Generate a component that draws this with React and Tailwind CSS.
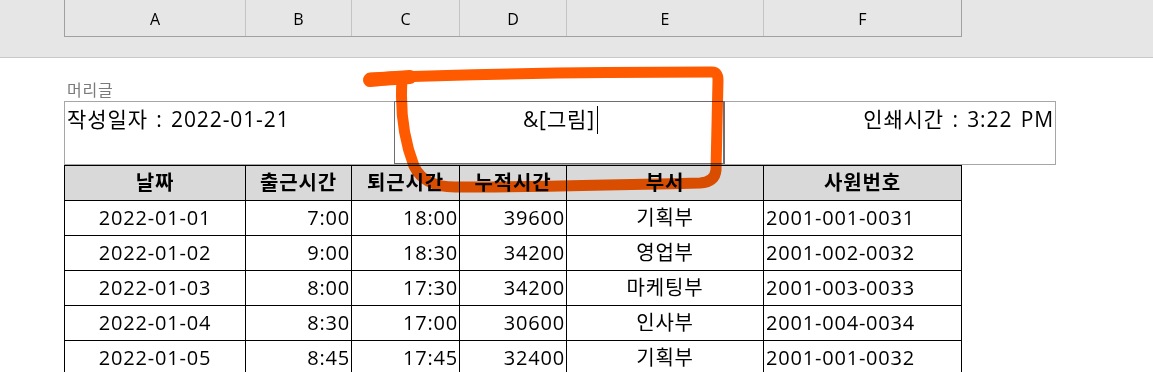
import React from "react";

const cols = [
  { l: "A", w: "w-[181px]" },
  { l: "B", w: "w-[106px]" },
  { l: "C", w: "w-[108px]" },
  { l: "D", w: "w-[107px]" },
  { l: "E", w: "w-[197px]" },
  { l: "F", w: "w-[198px]" },
];

const rows = [
  ["2022-01-01", "7:00", "18:00", "39600", "기획부", "2001-001-0031"],
  ["2022-01-02", "9:00", "18:30", "34200", "영업부", "2001-002-0032"],
  ["2022-01-03", "8:00", "17:30", "34200", "마케팅부", "2001-003-0033"],
  ["2022-01-04", "8:30", "17:00", "30600", "인사부", "2001-004-0034"],
  ["2022-01-05", "8:45", "17:45", "32400", "기획부", "2001-001-0032"],
];

const heads = ["날짜", "출근시간", "퇴근시간", "누적시간", "부서", "사원번호"];
const align = ["text-center", "text-right pr-[1px]", "text-right pr-[1px]", "text-right pr-[1px]", "text-center", "text-left pl-[2px]"];

export default function App() {
  return (
    <div
      className="relative w-[1153px] h-[372px] overflow-hidden bg-white text-black"
      style={{ fontFamily: '"Open Sans", "Noto Sans CJK KR", sans-serif' }}
    >
      {/* column header bar */}
      <div className="h-[58px] bg-[#e6e6e6] border-b border-[#c8c8c8]">
        <div className="flex pl-[64px]">
          <div className="flex h-[37px] border-l border-b border-[#a0a0a0]">
            {cols.map((c) => (
              <div
                key={c.l}
                className={`${c.w} flex items-center justify-center border-r border-[#c4c4c4] last:border-[#a0a0a0] text-[16px] leading-none pt-[1px]`}
              >
                {c.l}
              </div>
            ))}
          </div>
        </div>
      </div>

      {/* page header area */}
      <div className="pl-[64px]">
        <div className="h-[43px] flex items-end pl-[3px] pb-[1px] text-[16px] leading-[20px] tracking-[0.8px] text-[#7a7a7a]">
          머리글
        </div>
        <div className="flex w-[992px] h-[64px] border border-[#a6a6a6] text-[21px] leading-[28px] tracking-[0.9px] [word-spacing:2px]">
          <div className="w-[329px] pl-[2px] pt-[3px]">작성일자 : 2022-01-21</div>
          <div className="w-[331px] h-[63px] -mt-px border border-r-2 border-[#6e6e6e] flex justify-center pt-[3px]">
            <span className="relative">
              &amp;[그림]
              <span className="absolute -right-[3px] top-[1px] w-px h-[28px] bg-black" />
            </span>
          </div>
          <div className="flex-1 text-right pr-[1px] pt-[3px]">인쇄시간 : 3:22 PM</div>
        </div>

        {/* data table */}
        <table className="border-collapse text-[20px] leading-none tracking-[0.8px]">
          <thead>
            <tr className="h-[35px] bg-[#d9d9d9]">
              {heads.map((h, i) => (
                <th key={h} className={`${cols[i].w} border border-black font-bold text-center p-0`}>
                  {h}
                </th>
              ))}
            </tr>
          </thead>
          <tbody>
            {rows.map((r, ri) => (
              <tr key={ri} className="h-[35px]">
                {r.map((v, i) => (
                  <td key={i} className={`border border-black p-0 ${align[i]}`}>
                    {v}
                  </td>
                ))}
              </tr>
            ))}
          </tbody>
        </table>
      </div>

      {/* orange hand-drawn highlight */}
      <svg
        className="absolute left-0 top-0 pointer-events-none mix-blend-multiply"
        width="1153"
        height="372"
        viewBox="0 0 1153 372"
      >
        <path
          d="M 370 78 C 470 74, 600 72, 712 72 Q 718 72 718 80 L 716 170 Q 715 182 700 183 C 620 185, 520 187, 455 187 Q 424 187 414 166 C 404 140, 400 110, 402 80"
          fill="none"
          stroke="#ff5a00"
          strokeWidth="11"
          strokeLinecap="round"
          strokeLinejoin="round"
        />
        <path
          d="M 370 80 C 380 79, 395 78, 410 77"
          fill="none"
          stroke="#ff5a00"
          strokeWidth="14"
          strokeLinecap="round"
        />
      </svg>
    </div>
  );
}
